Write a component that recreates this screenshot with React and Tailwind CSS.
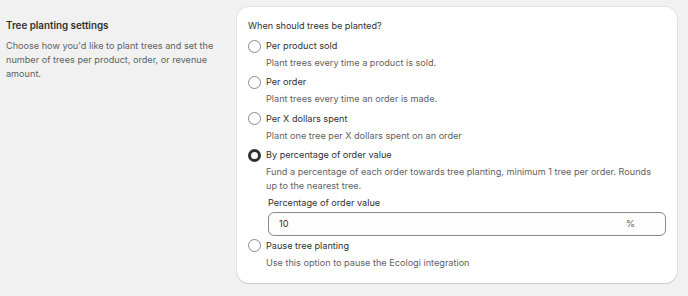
import React from "react";

function Radio({ checked }) {
  return checked ? (
    <span className="w-[13px] h-[13px] rounded-full border-[3.5px] border-[#303030] bg-white shrink-0 box-border" />
  ) : (
    <span className="w-[13px] h-[13px] rounded-full border border-[#8a8a8a] bg-white shrink-0 box-border" />
  );
}

function Option({ label, desc, checked, children }) {
  return (
    <div className="flex flex-col">
      <div className="flex items-center h-[16px] gap-[5px]">
        <Radio checked={checked} />
        <span className="text-[#303030]">{label}</span>
      </div>
      <div className="pl-[18px] pr-[14px] mt-[2px] text-[#616161] leading-[14px]">{desc}</div>
      {children}
    </div>
  );
}

export default function App() {
  return (
    <div
      className="w-[688px] h-[296px] bg-[#f1f1f1] flex text-[9.15px] leading-[14px] overflow-hidden"
      style={{ fontFamily: "Inter, 'Noto Sans', sans-serif" }}
    >
      <div className="w-[237px] shrink-0 pl-[6px] pr-[10px] pt-[18px]">
        <div className="font-semibold text-[#303030] text-[9.8px] leading-[15px]">Tree planting settings</div>
        <div className="mt-[6px] text-[#616161]">
          Choose how you'd like to plant trees and set the number of trees per product, order, or revenue amount.
        </div>
      </div>
      <div className="mt-[7px] w-[440px] h-[276px] bg-white rounded-[12px] shadow-[0_1px_1px_0_rgba(26,26,26,0.12),0_0_0_1px_rgba(0,0,0,0.05)] pl-[11px] pr-[11px] pt-[12px] flex flex-col">
        <div className="text-[#303030]">When should trees be planted?</div>
        <div className="mt-[5px] flex flex-col gap-[4.4px]">
          <Option label="Per product sold" desc="Plant trees every time a product is sold." />
          <Option label="Per order" desc="Plant trees every time an order is made." />
          <Option label="Per X dollars spent" desc="Plant one tree per X dollars spent on an order" />
          <Option
            checked
            label="By percentage of order value"
            desc="Fund a percentage of each order towards tree planting, minimum 1 tree per order. Rounds up to the nearest tree."
          >
            <div className="pl-[20px] mt-[3px] mb-[-3px]">
              <div className="text-[#303030]">Percentage of order value</div>
              <div className="mt-[2px] h-[24px] rounded-[6px] border border-[#8a8a8a] bg-[#fdfdfd] flex items-center pl-[10px] pr-[30px] text-[#303030]">
                <span className="flex-1">10</span>
                <span className="text-[#616161]">%</span>
              </div>
            </div>
          </Option>
          <Option label="Pause tree planting" desc="Use this option to pause the Ecologi integration" />
        </div>
      </div>
    </div>
  );
}
